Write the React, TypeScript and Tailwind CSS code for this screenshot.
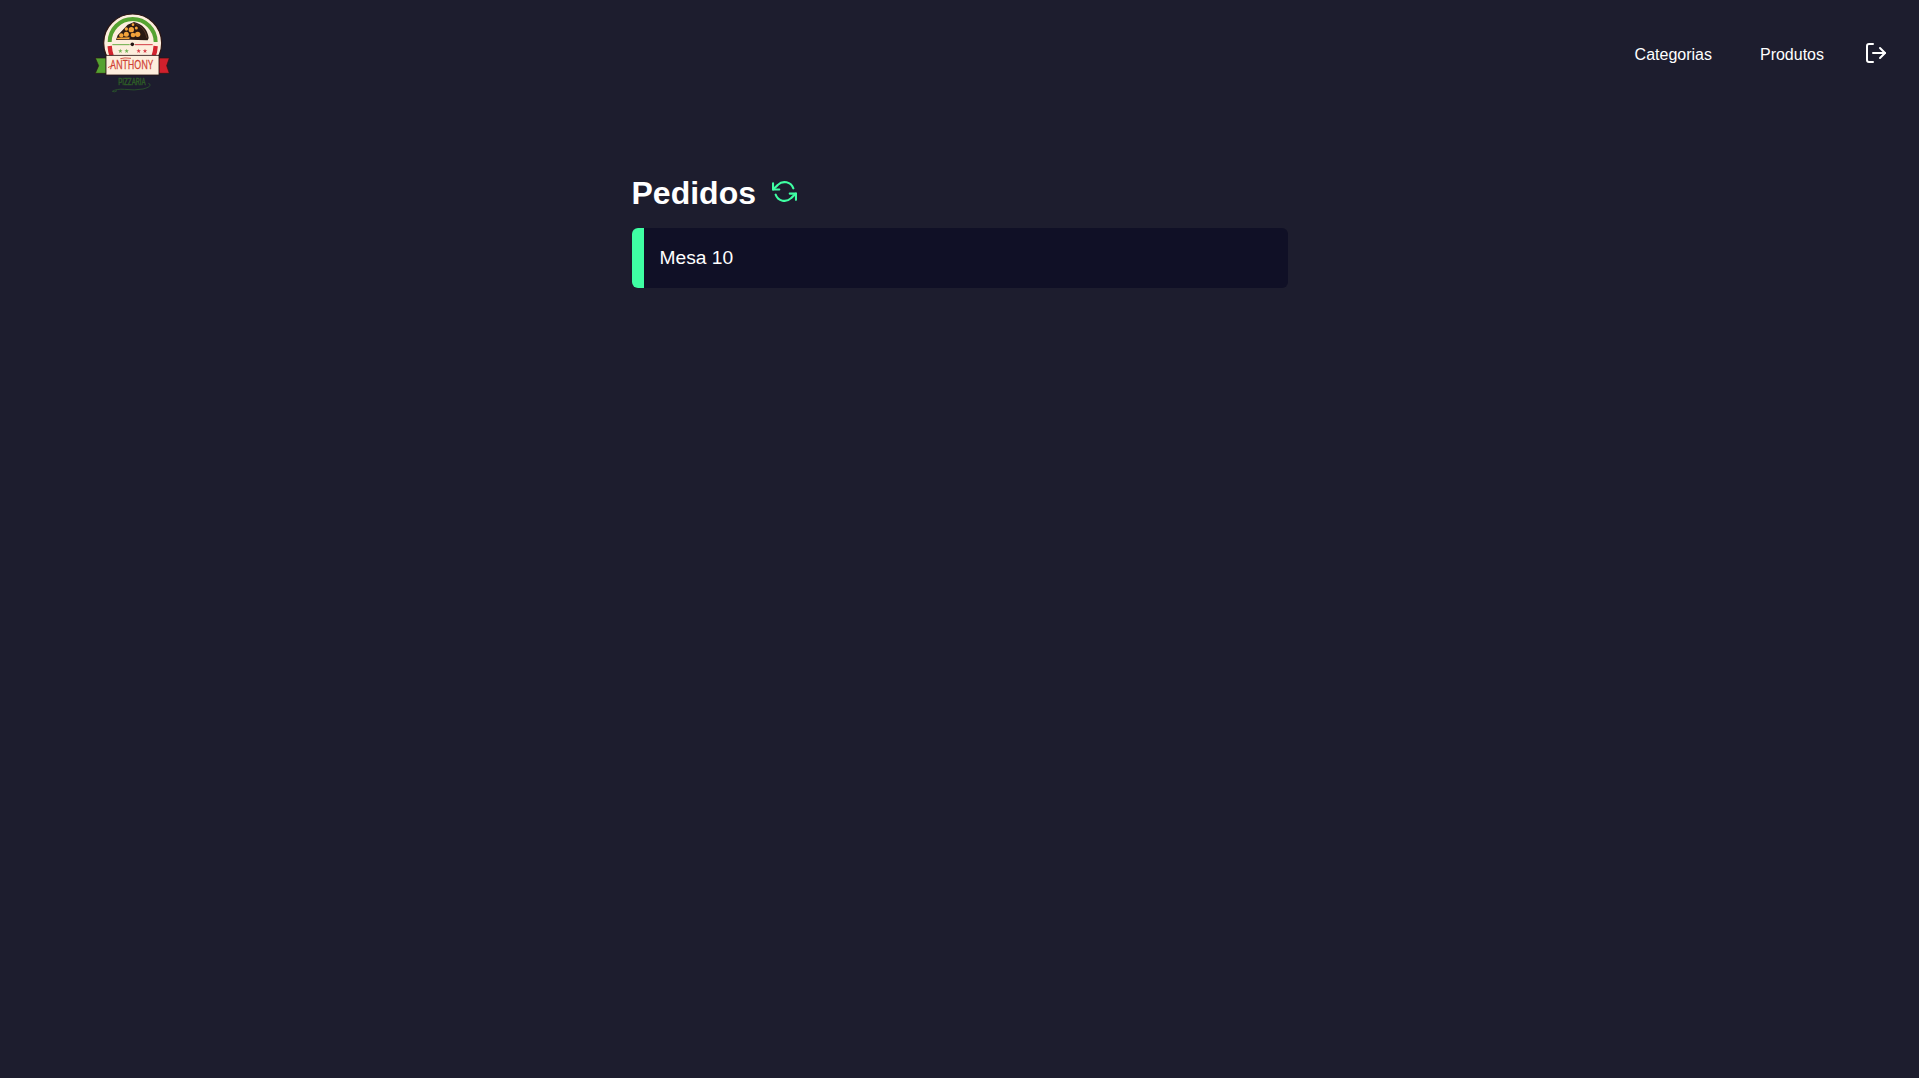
import { FiLogOut, FiRefreshCcw } from "react-icons/fi";

const STAR = "M0-7L1.8-2.2 6.8-2.2 2.8 1 4.2 6 0 3-4.2 6-2.8 1-6.8-2.2-1.8-2.2Z";

function Logo() {
  return (
    <svg viewBox="0 0 285 285" className="block size-[95px]" role="img" aria-label="Anthony Pizzaria">
      {/* badge */}
      <circle cx="143" cy="111" r="87" fill="#fdeedd" stroke="#2b1614" strokeWidth="3.5" />
      <path d="M74 108A69 69 0 0 1 212 108" fill="none" stroke="#55a331" strokeWidth="12" />
      <path d="M74 120Q75 136 80 150M212 120Q211 136 206 150" fill="none" stroke="#d3242e" strokeWidth="13" />
      {/* pizza slice */}
      <path d="M93 102L98 88 128 56 147 48Q186 58 191 96L188 103 158 102 136 101Z" fill="#2a1913" />
      <path d="M148 51Q180 63 186 96" fill="none" stroke="#6c4630" strokeWidth="2" />
      <g fill="#f3a33a">
        <circle cx="139" cy="71" r="8" />
        <circle cx="124" cy="85" r="7.5" />
        <circle cx="144" cy="87" r="7" />
        <circle cx="158" cy="85" r="8" />
        <circle cx="154" cy="66" r="4.5" />
        <circle cx="109" cy="88" r="6.5" />
        <circle cx="124" cy="69" r="5" />
        <circle cx="144" cy="56" r="4" />
        <path d="M97 95L134 94 133 99 95 100Z" />
      </g>
      {/* divider */}
      <path d="M82 116H134" stroke="#69ac46" strokeWidth="3" />
      <path d="M150 116H203" stroke="#d23b43" strokeWidth="3" />
      <circle cx="142" cy="115" r="5.5" fill="#241514" />
      {/* stars */}
      <g fill="#72b155">
        <path d={STAR} transform="translate(106 135)" />
        <path d={STAR} transform="translate(125 135)" />
      </g>
      <g fill="#d94049">
        <path d={STAR} transform="translate(161 135)" />
        <path d={STAR} transform="translate(180 135)" />
      </g>
      {/* ribbon */}
      <path d="M31 156H64V202H31L41 179Z" fill="#55a331" stroke="#2b1614" strokeWidth="2" />
      <path d="M253 156H221V202H253L245 179Z" fill="#d0202c" stroke="#2b1614" strokeWidth="2" />
      <rect x="63" y="148" width="159" height="59" fill="#fdeedd" stroke="#2b1614" strokeWidth="2.5" />
      <text
        x="76"
        y="188"
        fontSize="36"
        fill="#cf4033"
        stroke="#cf4033"
        strokeWidth="0.8"
        fontFamily="'Open Sans', sans-serif"
        textLength="128"
        lengthAdjust="spacingAndGlyphs"
      >
        ANTHONY
      </text>
      <path d="M69 185Q74 181 84 179M106 158Q118 154 138 157" fill="none" stroke="#cf4033" strokeWidth="2.6" />
      <text
        x="100"
        y="237"
        fontSize="28"
        fontFamily="Roboto, sans-serif"
        fill="#2d5a27"
        stroke="#2d5a27"
        strokeWidth="1.5"
        textLength="82"
        lengthAdjust="spacingAndGlyphs"
      >
        PIZZARIA
      </text>
      <path
        d="M82 256Q94 248 119 250Q148 254 174 249Q194 244 195 238Q196 233 190 232M82 256Q89 260 96 254"
        fill="none"
        stroke="#2b5a2b"
        strokeWidth="2.4"
      />
    </svg>
  );
}

export default function App() {
  return (
    <div className="min-h-[1078px] bg-[#1d1d2e] font-['Liberation_Sans',Arial,sans-serif] text-white">
      <header className="flex h-[106px] items-center justify-between pr-[31px] pl-[85px]">
        <Logo />
        <nav className="flex items-center">
          <a href="#" className="mr-12 pt-[3px] text-base">Categorias</a>
          <a href="#" className="mr-10 pt-[3px] text-base">Produtos</a>
          <button type="button" aria-label="Sair">
            <FiLogOut size={24} />
          </button>
        </nav>
      </header>
      <main className="mx-auto mt-16 w-[656px]">
        <div className="flex items-start gap-4">
          <h1 className="pt-px text-[32px] leading-[44px] font-bold">Pedidos</h1>
          <button type="button" aria-label="Atualizar" className="mt-[9px] text-[#3fffa3]">
            <FiRefreshCcw size={25} />
          </button>
        </div>
        <section className="mt-[13px] flex h-[60px] items-center overflow-hidden rounded-md bg-[#101026]">
          <div className="h-full w-3 bg-[#3fffa3]" />
          <span className="ml-4 text-[19.2px]">Mesa 10</span>
        </section>
      </main>
    </div>
  );
}
